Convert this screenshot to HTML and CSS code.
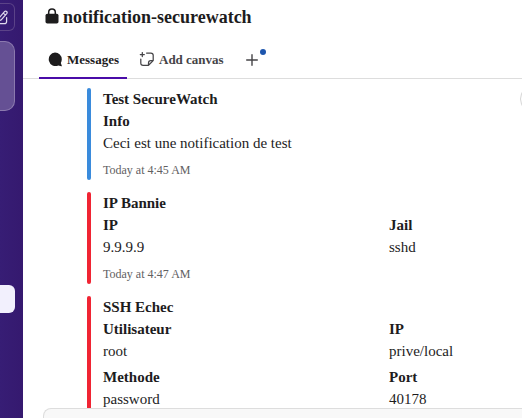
FILE: index.html
```html
<!DOCTYPE html>
<html lang="en">
<head>
<meta charset="utf-8">
<title>notification-securewatch</title>
<link rel="stylesheet" href="styles.css">
</head>
<body>
<div class="app">
  <aside class="sidebar">
    <div class="compose">
      <svg width="14" height="20" viewBox="0 0 14 20" fill="none" stroke="#e0daee" stroke-width="1.25" stroke-linecap="round" stroke-linejoin="round"><path d="M-1 10 4.5 3.6Q5.5 2.5 6.6 3.5 7.6 4.5 6.7 5.6L1.2 11.8-2 13zM3.3 5.1l2 1.8M6.6 9.5v4q0 2.2-2.2 2.2H-3"/></svg>
    </div>
    <div class="panel"></div>
    <div class="selected"></div>
  </aside>
  <main class="main">
    <header class="header">
      <svg class="lock" width="14" height="16" viewBox="0 0 14 16"><path d="M3.7 7V4.2a3.3 3.3 0 0 1 6.6 0V7" fill="none" stroke="#1d1c1d" stroke-width="1.5"/><rect x=".5" y="5.8" width="13" height="9.7" rx="1.8" fill="#1d1c1d"/></svg>
      <h1>notification-securewatch</h1>
    </header>
    <nav class="tabs">
      <div class="tab active">
        <svg width="16" height="16" viewBox="0 0 16 16" fill="#1d1c1d"><path d="M8 .5a6.8 6.8 0 0 1 6.8 6.8c0 1.5-.4 2.8-1 3.8l1 2.6q.2.6-.5.5l-3-.7A6.8 6.8 0 1 1 8 .5z"/></svg>
        <span>Messages</span>
      </div>
      <div class="tab">
        <svg width="16" height="16" viewBox="0 0 16 16" fill="none" stroke="#454447" stroke-width="1.25" stroke-linecap="round" stroke-linejoin="round"><path d="M3.3.6v4M1.3 2.6h4M7.6 1h4.3q2.3 0 2.3 2.3v5.3l-4.7 4.7H4.1q-2.3 0-2.3-2.3V7M14.2 8.6h-2.4q-2.3 0-2.3 2.3v2.4"/></svg>
        <span>Add canvas</span>
      </div>
      <div class="add">
        <svg width="12" height="12" viewBox="0 0 12 12" stroke="#454447" stroke-width="1.4" stroke-linecap="round"><path d="M6 .7v10.6M.7 6h10.6"/></svg>
        <i class="dot"></i>
      </div>
    </nav>
    <section class="messages">
      <div class="round"></div>
      <article class="attachment info">
        <b>Test SecureWatch</b>
        <b>Info</b>
        <p>Ceci est une notification de test</p>
        <footer>Today at 4:45 AM</footer>
      </article>
      <article class="attachment">
        <b>IP Bannie</b>
        <div class="fields">
          <div><b>IP</b><p>9.9.9.9</p></div>
          <div><b>Jail</b><p>sshd</p></div>
        </div>
        <footer>Today at 4:47 AM</footer>
      </article>
      <article class="attachment">
        <b>SSH Echec</b>
        <div class="fields">
          <div><b>Utilisateur</b><p>root</p></div>
          <div><b>IP</b><p>prive/local</p></div>
          <div><b>Methode</b><p>password</p></div>
          <div><b>Port</b><p>40178</p></div>
        </div>
      </article>
    </section>
    <div class="composer"></div>
  </main>
</div>
</body>
</html>
```

FILE: styles.css
```css
* { box-sizing: border-box; }
body {
  margin: 0;
  overflow: hidden;
  background: #fff;
  color: #1d1c1d;
  font: 15px/22px "Liberation Serif", serif;
}
h1, p { margin: 0; }
svg { display: block; flex: none; }
.app { display: flex; height: 418px; overflow: hidden; }
.sidebar {
  flex: none;
  width: 23px;
  padding: 3px 8px 0 0;
  background: linear-gradient(90deg, #371d75, #35196f);
}
.compose {
  height: 28px;
  padding-top: 4px;
  border: 1px solid #5b4388;
  border-left: 0;
  border-radius: 0 6px 6px 0;
}
.panel {
  height: 70px;
  margin-top: 10px;
  border: 1px solid #8b79ae;
  border-left: 0;
  border-radius: 0 10px 10px 0;
  background: #655094;
}
.selected {
  height: 28px;
  margin-top: 174px;
  border-radius: 0 6px 6px 0;
  background: #f2f0fd;
}
.main { flex: 1; display: flex; flex-direction: column; min-width: 0; }
.header { flex: none; display: flex; height: 41px; padding: 6px 0 0 22px; gap: 4px; }
.lock { margin-top: 2px; }
h1 { font-size: 18px; line-height: 22px; }
.tabs {
  flex: none;
  display: flex;
  height: 38px;
  padding-left: 16px;
  border-bottom: 1px solid #dddddd;
  font-size: 13px;
  font-weight: bold;
  color: #454447;
}
.tab { display: flex; align-items: center; gap: 4px; height: 38px; padding: 0 8px; }
.tab + .tab { padding-left: 12px; }
.active { color: #1d1c1d; border-bottom: 2px solid #4a0ca8; padding-top: 2px; }
.add { position: relative; padding: 13px 0 0 14px; }
.dot {
  position: absolute;
  left: 28px;
  top: 8px;
  width: 6px;
  height: 6px;
  border-radius: 50%;
  background: #1d55ad;
}
.messages {
  flex: 1;
  min-height: 0;
  position: relative;
  display: flex;
  flex-direction: column;
  gap: 12px;
  padding: 9px 0 0 64px;
  overflow: hidden;
}
.round {
  position: absolute;
  left: 497px;
  top: 5px;
  width: 30px;
  height: 30px;
  border: 1px solid #d5d5d5;
  border-radius: 50%;
}
.attachment { flex: none; position: relative; padding-left: 16px; }
.attachment::before {
  content: "";
  position: absolute;
  left: 0;
  top: 0;
  bottom: 0;
  width: 4px;
  border-radius: 2px;
  background: #f02433;
}
.info::before { background: #3a8bdc; }
.attachment b { display: block; }
.fields { display: grid; grid-template-columns: 286px 1fr; row-gap: 4px; }
.attachment footer { padding-top: 4px; height: 26px; font-size: 12px; line-height: 24px; color: #616061; }
.composer {
  flex: none;
  height: 10px;
  margin-left: 20px;
  border: 1px solid #dddddd;
  border-width: 1px 0 0 1px;
  border-radius: 8px 0 0 0;
  background: #f8f8f8;
}
```
